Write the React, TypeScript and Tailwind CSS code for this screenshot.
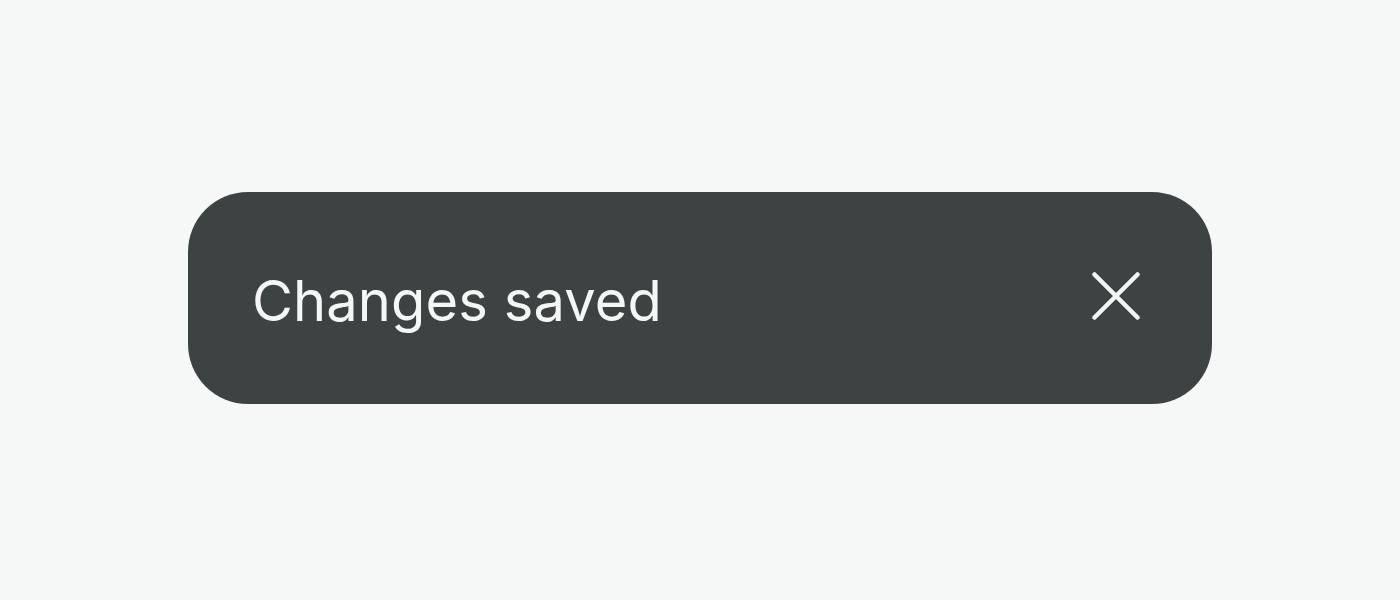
export default function App() {
  return (
    <div className="w-full h-[600px] bg-[#f6f7f7] flex justify-center pt-[192px]" style={{ fontFamily: 'Inter, "Noto Sans", sans-serif' }}>
      <div className="w-[1024px] h-[212px] rounded-[60px] bg-[#3d4343] flex items-center justify-between pl-[64px] pr-[72px]">
        <span className="text-[56px] leading-none text-[#f5f7f7] tracking-[0.002em] mt-[5px]">Changes saved</span>
        <button className="w-12 h-12 flex items-center justify-center -mt-1" aria-label="Close">
          <svg width="48" height="48" viewBox="0 0 48 48" fill="none" stroke="#f5f7f7" strokeWidth="4.5" strokeLinecap="round">
            <path d="M2.5 2.5L45.5 45.5M45.5 2.5L2.5 45.5" />
          </svg>
        </button>
      </div>
    </div>
  );
}
